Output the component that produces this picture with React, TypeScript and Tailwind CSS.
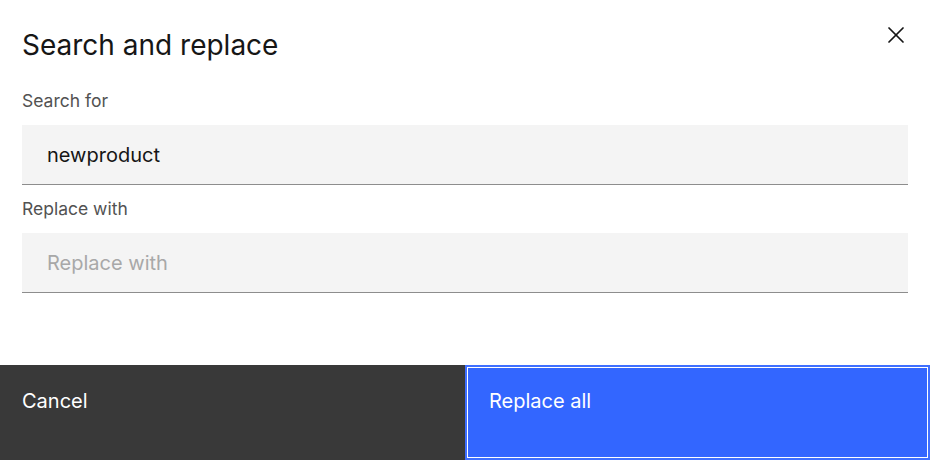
import { X } from 'lucide-react';

function Field({ label, value, placeholder }: { label: string; value?: string; placeholder?: string }) {
    return (
        <div className="flex flex-col">
            <label className="text-[17.5px] leading-[24px] text-[#525252] mb-[12px]">{label}</label>
            <div className="h-[60px] bg-[#f4f4f4] border-b border-[#8d8d8d] flex items-center px-[25px]">
                {value ? (
                    <span className="text-[20px] text-[#161616]">{value}</span>
                ) : (
                    <span className="text-[20px] text-[#a8a8a8]">{placeholder}</span>
                )}
            </div>
        </div>
    );
}

export default function App() {
    return (
        <div
            className="w-[930px] h-[460px] bg-white flex flex-col overflow-hidden"
            style={{ fontFamily: 'Inter, "Noto Sans", sans-serif' }}
        >
            <div className="flex-1 px-[22px] pt-[27px]">
                <div className="flex items-start justify-between">
                    <h2 className="text-[28px] leading-[36px] text-[#161616]">Search and replace</h2>
                    <button className="w-[28px] h-[28px] mt-[-6px] mr-[-2px] flex items-center justify-center text-[#161616]">
                        <X className="w-[28px] h-[28px]" strokeWidth={1.5} />
                    </button>
                </div>
                <div className="mt-[26px] flex flex-col gap-[12px]">
                    <Field label="Search for" value="newproduct" />
                    <Field label="Replace with" placeholder="Replace with" />
                </div>
            </div>
            <div className="h-[95px] flex">
                <button className="w-[465px] h-full bg-[#393939] text-white text-left text-[20px] leading-[28px] pl-[22px] pt-[22px] flex items-start">
                    Cancel
                </button>
                <button className="flex-1 h-full bg-[#3366ff] text-white text-left text-[20px] leading-[28px] pl-[22px] pt-[20px] flex items-start border-2 border-[#3f6fff] shadow-[inset_0_0_0_1px_#ffffff]">
                    Replace all
                </button>
            </div>
        </div>
    );
}
